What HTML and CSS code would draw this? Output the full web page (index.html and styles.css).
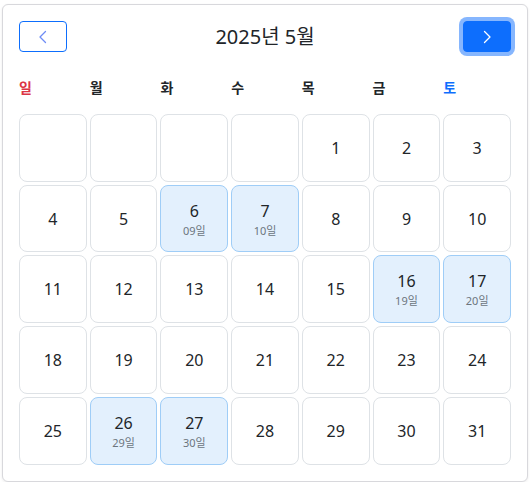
FILE: index.html
```html
<!DOCTYPE html>
<html lang="ko">
<head>
<meta charset="utf-8">
<link rel="stylesheet" href="styles.css">
</head>
<body>
<div class="card">
  <div class="cal-header">
    <button class="nav-btn prev" type="button" aria-label="이전 달">
      <svg width="16" height="16" viewBox="0 0 16 16"><path d="M10.5 2.5 5 8l5.5 5.5" fill="none" stroke="currentColor" stroke-width="1.3" stroke-linecap="round" stroke-linejoin="round"/></svg>
    </button>
    <h2 class="title">2025년 5월</h2>
    <button class="nav-btn next" type="button" aria-label="다음 달">
      <svg width="16" height="16" viewBox="0 0 16 16"><path d="M5.5 2.5 11 8l-5.5 5.5" fill="none" stroke="currentColor" stroke-width="1.3" stroke-linecap="round" stroke-linejoin="round"/></svg>
    </button>
  </div>
  <div class="weekdays">
    <div class="wd sun">일</div>
    <div class="wd">월</div>
    <div class="wd">화</div>
    <div class="wd">수</div>
    <div class="wd">목</div>
    <div class="wd">금</div>
    <div class="wd sat">토</div>
  </div>
  <div class="grid">
    <div class="day empty"></div>
    <div class="day empty"></div>
    <div class="day empty"></div>
    <div class="day empty"></div>
    <div class="day"><span class="num">1</span></div>
    <div class="day"><span class="num">2</span></div>
    <div class="day"><span class="num">3</span></div>

    <div class="day"><span class="num">4</span></div>
    <div class="day"><span class="num">5</span></div>
    <div class="day marked"><span class="num">6</span><span class="sub">09일</span></div>
    <div class="day marked"><span class="num">7</span><span class="sub">10일</span></div>
    <div class="day"><span class="num">8</span></div>
    <div class="day"><span class="num">9</span></div>
    <div class="day"><span class="num">10</span></div>

    <div class="day"><span class="num">11</span></div>
    <div class="day"><span class="num">12</span></div>
    <div class="day"><span class="num">13</span></div>
    <div class="day"><span class="num">14</span></div>
    <div class="day"><span class="num">15</span></div>
    <div class="day marked"><span class="num">16</span><span class="sub">19일</span></div>
    <div class="day marked"><span class="num">17</span><span class="sub">20일</span></div>

    <div class="day"><span class="num">18</span></div>
    <div class="day"><span class="num">19</span></div>
    <div class="day"><span class="num">20</span></div>
    <div class="day"><span class="num">21</span></div>
    <div class="day"><span class="num">22</span></div>
    <div class="day"><span class="num">23</span></div>
    <div class="day"><span class="num">24</span></div>

    <div class="day"><span class="num">25</span></div>
    <div class="day marked"><span class="num">26</span><span class="sub">29일</span></div>
    <div class="day marked"><span class="num">27</span><span class="sub">30일</span></div>
    <div class="day"><span class="num">28</span></div>
    <div class="day"><span class="num">29</span></div>
    <div class="day"><span class="num">30</span></div>
    <div class="day"><span class="num">31</span></div>
  </div>
</div>
</body>
</html>
```

FILE: styles.css
```css
* { box-sizing: border-box; }

html, body {
  margin: 0;
  background: #ffffff;
}

body {
  padding: 4px 4px 0 2px;
  font-family: "Noto Sans", "Noto Sans CJK KR", sans-serif;
  color: #212529;
}

.card {
  border: 1px solid #d8d8dc;
  border-radius: 6px;
  padding: 16px;
  background: #fff;
  box-shadow: 0 1px 3px rgba(0, 0, 0, 0.08);
}

.cal-header {
  display: flex;
  align-items: center;
  justify-content: space-between;
  height: 31px;
}

.title {
  margin: 0;
  font-size: 20px;
  font-weight: 400;
  line-height: 1.2;
}

.nav-btn {
  width: 48px;
  height: 31px;
  border-radius: 4px;
  display: flex;
  align-items: center;
  justify-content: center;
  padding: 0;
  cursor: pointer;
}

.nav-btn.prev {
  background: #fff;
  border: 1px solid #0d6efd;
  color: #6e8cf5;
}

.nav-btn.next {
  background: #0d6efd;
  border: 1px solid #0d6efd;
  color: #fff;
  box-shadow: 0 0 0 4px rgba(13, 110, 253, 0.5);
}

.weekdays {
  display: grid;
  grid-template-columns: repeat(7, 1fr);
  gap: 3px;
  margin-top: 25px;
  margin-bottom: 16px;
  height: 21px;
}

.wd {
  font-size: 14px;
  font-weight: 700;
  line-height: 21px;
}

.wd.sun { color: #dc3545; }
.wd.sat { color: #0d6efd; }

.grid {
  display: grid;
  grid-template-columns: repeat(7, 1fr);
  gap: 3px;
}

.day {
  aspect-ratio: 1 / 1;
  border: 1px solid #dee2e6;
  border-radius: 8px;
  display: flex;
  flex-direction: column;
  align-items: center;
  justify-content: center;
  background: #fff;
}

.day.marked {
  background: #e3f0fd;
  border-color: #9fcdf7;
}

.num {
  font-size: 16px;
  line-height: 22px;
}

.sub {
  font-size: 11px;
  line-height: 14px;
  color: #6c757d;
  margin-top: 2px;
}
```
